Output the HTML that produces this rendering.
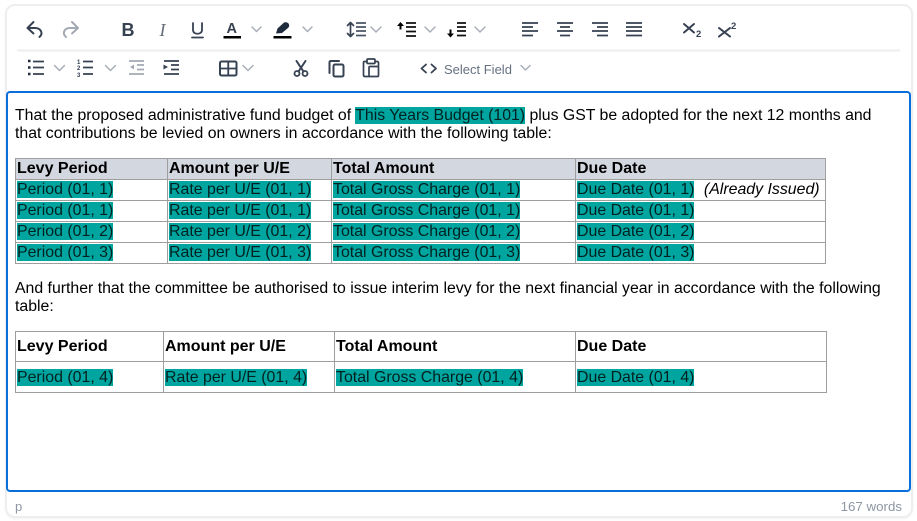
<!DOCTYPE html>
<html><head><meta charset="utf-8">
<style>
html,body{margin:0;padding:0;background:#fff;width:917px;height:521px;overflow:hidden}
body{position:relative;font-family:"Liberation Sans",sans-serif;color:#000}
.abs{position:absolute}
#outer{left:5px;top:4px;width:904px;height:510px;border:2px solid #eeeeee;border-radius:10px;box-shadow:0 1px 2px rgba(0,0,0,.05)}
#editor{left:6px;top:91px;width:901px;height:397px;border:2px solid #0a6edb;border-radius:4px;background:#fff}
.ln{position:absolute;left:15px;font-size:15.84px;line-height:18px;white-space:nowrap}
mark{background:#00a5a0;color:#00211f}
table{position:absolute;border-collapse:collapse;table-layout:fixed;font-size:15.9px;line-height:18px}
td,th{border:1px solid #9e9e9e;padding:0 0 0 1px;text-align:left;white-space:nowrap;overflow:visible;vertical-align:middle}
th{font-weight:bold;font-size:16px}
#t1 th{background:#d3d7e0}
#t1 tr{height:21px}
#t1 td,#t1 th{height:20px}
#t2 td{padding-top:2px;padding-left:1px}
#t2 th{padding-left:1px}
svg{position:absolute;left:0;top:0}
.st{fill:none;stroke:#364152;stroke-width:2;stroke-linecap:round;stroke-linejoin:round}
.th{stroke-width:1.7;stroke-linecap:butt}
.dis{stroke:#a3a9b2}
.ch{fill:none;stroke:#a9afb8;stroke-width:1.5;stroke-linecap:round;stroke-linejoin:round}
.lb{font-family:"Liberation Sans",sans-serif;fill:#364152}
</style></head>
<body>
<div class="abs" id="outer"></div>
<svg width="917" height="90" viewBox="0 0 917 90">
<line x1="17" y1="50.500" x2="900" y2="50.500" stroke="#eeeeee" stroke-width="2"/>
<!-- undo / redo -->
<path class="st" d="M33.500 22L27.500 28L33.500 33.500M27.500 28H35C41 28 43.500 33.500 39.500 37"/>
<path class="st dis" d="M72 22L78 28L72 33.500M78 28H70C64 28 62 33.500 66 37"/>
<!-- B I U -->
<text class="lb" x="121.500" y="36" font-size="18" font-weight="bold">B</text>
<text x="159.500" y="36" font-size="18" font-style="italic" fill="#656d78" font-family="Liberation Serif,serif">I</text>
<path class="st" style="stroke-width:1.800" d="M193 23V30C193 35 202 35 202 30V23M192 37.500H203"/>
<!-- font colour -->
<text class="lb" x="226.500" y="33" font-size="14.500" font-weight="bold">A</text>
<rect x="223.500" y="36" width="17.500" height="2.500" fill="#000"/>
<path class="ch" d="M252 27l4.500 4.500l4.500-4.500"/>
<!-- highlight -->
<path d="M276 33.500l1.500-5l6-5.500c2-1.500 5-.5 5.500 1.500c.5 1.500 0 2.500-1 3.500l-6 5z" fill="#1f2b3d"/>
<rect x="273.500" y="36" width="18" height="2.500" fill="#000"/>
<path class="ch" d="M303 27l4.500 4.500l4.500-4.500"/>
<!-- line height -->
<path class="st" style="stroke-width:1.700" d="M350.500 23V36M347.500 25.500l3-3l3 3M347.500 33.500l3 3l3-3"/>
<path class="st th" d="M356 23H366M356 27H366M356 31H366M356 35.500H366" style="stroke:#4a5565"/>
<path class="ch" d="M371 27l5 5l5-5"/>
<!-- before -->
<path d="M400.500 22l-3.500 4h2.500v3.500h2v-3.500h2.500z" fill="#000"/>
<path class="st th" style="stroke:#111" d="M406 23H416M406 27H416M406 31.500H416M406 36H416"/>
<path class="ch" d="M425 27l5 5l5-5"/>
<!-- after -->
<path d="M450.500 37.500l-3.500-4h2.500v-4h2v4h2.500z" fill="#000"/>
<path class="st th" style="stroke:#111" d="M457 23H466M457 27H466M457 31H466M457 35.500H466"/>
<path class="ch" d="M475 27l5 5l5-5"/>
<!-- align -->
<path class="st th" d="M522 23H538M522 27H533M522 31H538M522 35.500H533"/>
<path class="st th" d="M557 23H573M560 27H570M557 31H573M560 35.500H570"/>
<path class="st th" d="M592 23H608M597 27H608M592 31H608M597 35.500H608"/>
<path class="st th" d="M626 23H642M626 27H642M626 31H642M626 35.500H642"/>
<!-- sub / sup -->
<path class="st" d="M684 24L694 32.500M694 24L684 32.500"/>
<text class="lb" x="696" y="37" font-size="9.500" font-weight="bold">2</text>
<path class="st" d="M719 28L730 36.500M730 28L719 36.500"/>
<text class="lb" x="731" y="29" font-size="9.500" font-weight="bold">2</text>
<!-- row 2 : bullets -->
<path d="M28 61h2.500M28 67.500h2.500M28 74h2.500" stroke="#1f2b3d" stroke-width="2.500" fill="none"/>
<path class="st th" d="M33 61.500H44M33 67.500H44M33 74H44"/>
<path class="ch" d="M54.500 65.500l5 5l5-5"/>
<!-- numbered -->
<text class="lb" x="77" y="64" font-size="6" font-weight="bold">1</text>
<text class="lb" x="77" y="70" font-size="6" font-weight="bold">2</text>
<text class="lb" x="77" y="77" font-size="6" font-weight="bold">3</text>
<path class="st th" d="M83 61.500H93M83 67.500H93M83 74H93"/>
<path class="ch" d="M105.500 65.500l5 5l5-5"/>
<!-- outdent -->
<path class="st th dis" d="M129 61H144M137 65H144M137 69.500H144M129 74H144"/>
<path d="M134 64.500v5l-4-2.500z" fill="#a3a9b2"/>
<!-- indent -->
<path class="st th" d="M164 61H179M171 65H179M171 69.500H179M164 74H179"/>
<path d="M163.500 64.500v5l4.500-2.500z" fill="#364152"/>
<!-- table -->
<rect x="220" y="61.500" width="16.500" height="14" rx="1.500" fill="none" stroke="#364152" stroke-width="2"/>
<path d="M220 68.500H236.500M228.250 62V75" stroke="#364152" stroke-width="1.800" fill="none"/>
<path class="ch" d="M243 65.500l5 5l5-5"/>
<!-- cut -->
<circle cx="297" cy="73.500" r="2.500" fill="none" stroke="#364152" stroke-width="1.800"/>
<circle cx="305" cy="73.500" r="2.500" fill="none" stroke="#364152" stroke-width="1.800"/>
<path class="st" d="M298.500 71.500L305.500 61M303.500 71.500L296.500 61" style="stroke-width:2"/>
<!-- copy -->
<path class="st" d="M329.500 73V62.500Q329.500 61 331 61H339"/>
<rect x="333.500" y="64.500" width="10" height="12" rx="1.500" fill="none" stroke="#364152" stroke-width="2"/>
<!-- paste -->
<path class="st" style="stroke-width:1.700" d="M367 61.500H364.500Q363.500 61.500 363.500 62.500V75Q363.500 76.500 365 76.500H369M375 61.500H377Q378.500 61.500 378.500 63V66"/>
<rect x="367" y="59" width="8" height="4.500" rx="1" fill="none" stroke="#364152" stroke-width="1.700"/>
<rect x="369" y="66.500" width="9.500" height="10" rx="1" fill="none" stroke="#364152" stroke-width="1.700"/>
<!-- code -->
<path class="st" d="M426 64.500L421.500 68.500L426 72.500M431.500 64.500L436 68.500L431.500 72.500" style="stroke-width:1.800"/>
<path class="ch" d="M521 65.500l4.500 4.500l4.500-4.500"/>
</svg>
<div class="abs" style="left:444px;top:61px;font-size:13px;line-height:17px;color:#667180;white-space:nowrap">Select Field</div>

<div class="abs" id="editor"></div>

<div class="ln" style="top:107px">That the proposed administrative fund budget of <mark>This Years Budget (101)</mark> plus GST be adopted for the next 12 months and</div>
<div class="ln" style="top:125px">that contributions be levied on owners in accordance with the following table:</div>

<table id="t1" style="left:15px;top:158px;width:810px">
<colgroup><col style="width:152px"><col style="width:164px"><col style="width:244px"><col style="width:250px"></colgroup>
<tr><th>Levy Period</th><th>Amount per U/E</th><th>Total Amount</th><th>Due Date</th></tr>
<tr><td><mark>Period (01, 1)</mark></td><td><mark>Rate per U/E (01, 1)</mark></td><td><mark>Total Gross Charge (01, 1)</mark></td><td><mark>Due Date (01, 1)</mark> <i style="margin-left:5px">(Already Issued)</i></td></tr>
<tr><td><mark>Period (01, 1)</mark></td><td><mark>Rate per U/E (01, 1)</mark></td><td><mark>Total Gross Charge (01, 1)</mark></td><td><mark>Due Date (01, 1)</mark></td></tr>
<tr><td><mark>Period (01, 2)</mark></td><td><mark>Rate per U/E (01, 2)</mark></td><td><mark>Total Gross Charge (01, 2)</mark></td><td><mark>Due Date (01, 2)</mark></td></tr>
<tr><td><mark>Period (01, 3)</mark></td><td><mark>Rate per U/E (01, 3)</mark></td><td><mark>Total Gross Charge (01, 3)</mark></td><td><mark>Due Date (01, 3)</mark></td></tr>
</table>

<div class="ln" style="top:280px">And further that the committee be authorised to issue interim levy for the next financial year in accordance with the following</div>
<div class="ln" style="top:298px">table:</div>

<table id="t2" style="left:15px;top:331px;width:811px">
<colgroup><col style="width:148px"><col style="width:171px"><col style="width:241px"><col style="width:251px"></colgroup>
<tr style="height:30px"><th>Levy Period</th><th>Amount per U/E</th><th>Total Amount</th><th>Due Date</th></tr>
<tr style="height:31px"><td><mark>Period (01, 4)</mark></td><td><mark>Rate per U/E (01, 4)</mark></td><td><mark>Total Gross Charge (01, 4)</mark></td><td><mark>Due Date (01, 4)</mark></td></tr>
</table>

<div class="abs" style="left:15px;top:499px;font-size:13px;line-height:16px;color:#8d96a3">p</div>
<div class="abs" style="right:15px;top:499px;font-size:13.3px;line-height:16px;color:#8d96a3;white-space:nowrap">167 words</div>
</body></html>
